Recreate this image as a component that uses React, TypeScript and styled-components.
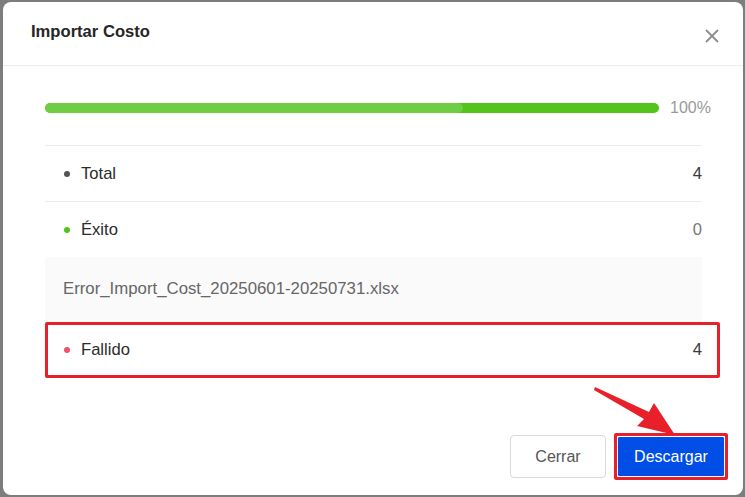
import styled, { createGlobalStyle } from "styled-components";

const GlobalStyle = createGlobalStyle`
    html, body {
        margin: 0;
        padding: 0;
        background: #7d7d7d;
        font-family: "Liberation Sans", Arial, sans-serif;
    }
`;

const Backdrop = styled.div`
    width: 745px;
    height: 497px;
    padding: 2px 2px 2px 3px;
    box-sizing: border-box;
    overflow: hidden;
`;

const Modal = styled.div`
    position: relative;
    width: 740px;
    height: 493px;
    background: #ffffff;
    border-radius: 8px;
    display: flex;
    flex-direction: column;
`;

const Header = styled.div`
    display: flex;
    align-items: center;
    justify-content: space-between;
    height: 64px;
    padding: 0 23px 0 28px;
    border-bottom: 1px solid #ededed;
    box-sizing: border-box;
`;

const Title = styled.div`
    font-size: 16.6px;
    font-weight: 700;
    color: #262626;
    margin-top: -3px;
`;

const Close = styled.button`
    border: 0;
    background: none;
    padding: 0;
    width: 16px;
    height: 16px;
    display: flex;
    align-items: center;
    justify-content: center;
    margin-top: 5px;
`;

const Body = styled.div`
    padding: 37px 41px 0 42px;
    display: flex;
    flex-direction: column;
`;

const ProgressLine = styled.div`
    width: 666px;
    display: flex;
    align-items: center;
    gap: 11px;
    height: 10px;
    margin-bottom: 32px;
`;

const Track = styled.div`
    flex: 1;
    height: 10px;
    border-radius: 5px;
    background: #52c41a;
    overflow: hidden;
    display: flex;
`;

const Shine = styled.div`
    height: 100%;
    background: #6fcd43;
    border-radius: 5px;
`;

const Percent = styled.span`
    font-size: 16px;
    color: #999999;
    width: 41px;
`;

const List = styled.div`
    width: 657px;
    display: flex;
    flex-direction: column;
`;

const Row = styled.div<{ $line?: boolean }>`
    height: 56px;
    display: flex;
    align-items: center;
    justify-content: space-between;
    padding-left: 19px;
    border-top: ${(p) => (p.$line ? "1px solid #ececec" : "0")};
    box-sizing: border-box;
    font-size: 16.6px;
`;

const Label = styled.span`
    display: flex;
    align-items: center;
    gap: 11px;
    color: #2b2b2b;
`;

const Dot = styled.span<{ $color: string }>`
    width: 6px;
    height: 6px;
    border-radius: 50%;
    background: ${(p) => p.$color};
`;

const Value = styled.span<{ $muted?: boolean }>`
    color: ${(p) => (p.$muted ? "#777777" : "#3a3a3a")};
`;

const FileBox = styled.div`
    height: 65px;
    background: #fafafa;
    display: flex;
    align-items: center;
    padding: 0 0 2px 18px;
    box-sizing: border-box;
    font-size: 16.8px;
    color: #666666;
`;

const Marked = styled.div`
    position: relative;
`;

const MarkBox = styled.div`
    position: absolute;
    left: 0;
    top: 0;
    width: 675px;
    height: 56px;
    border: 3px solid #e8202a;
    border-radius: 2px;
    box-sizing: border-box;
    pointer-events: none;
`;

const Footer = styled.div`
    margin-top: auto;
    display: flex;
    justify-content: flex-end;
    align-items: center;
    gap: 8px;
    padding: 0 15px 15px 0;
`;

const Button = styled.button<{ $primary?: boolean }>`
    font-family: "Liberation Sans", Arial, sans-serif;
    font-size: 16px;
    width: ${(p) => (p.$primary ? "106px" : "96px")};
    height: ${(p) => (p.$primary ? "39px" : "43px")};
    padding: 0;
    border-radius: ${(p) => (p.$primary ? "1px" : "4px")};
    cursor: pointer;
    border: 1px solid ${(p) => (p.$primary ? "#004ee6" : "#d9d9d9")};
    background: ${(p) => (p.$primary ? "#004ee6" : "#ffffff")};
    color: ${(p) => (p.$primary ? "#ffffff" : "#555555")};
`;

const Highlight = styled.div`
    border: 3px solid #e8202a;
    border-radius: 2px;
    padding: 1px;
    display: flex;
`;

const Arrow = styled.svg`
    position: absolute;
    left: 577px;
    top: 378px;
    pointer-events: none;
`;

export default function App() {
    return (
        <>
            <GlobalStyle />
            <Backdrop>
                <Modal>
                    <Header>
                        <Title>Importar Costo</Title>
                        <Close aria-label="Cerrar">
                            <svg width="14" height="14" viewBox="0 0 14 14">
                                <path d="M1 1L13 13M13 1L1 13" stroke="#8c8c8c" strokeWidth="1.8" />
                            </svg>
                        </Close>
                    </Header>
                    <Body>
                        <ProgressLine>
                            <Track>
                                <Shine style={{ width: "68%" }} />
                            </Track>
                            <Percent>100%</Percent>
                        </ProgressLine>
                        <List>
                            <Row $line>
                                <Label><Dot $color="#555555" />Total</Label>
                                <Value>4</Value>
                            </Row>
                            <Row $line>
                                <Label><Dot $color="#52c41a" />Éxito</Label>
                                <Value $muted>0</Value>
                            </Row>
                            <FileBox>Error_Import_Cost_20250601-20250731.xlsx</FileBox>
                            <Marked>
                                <Row>
                                    <Label><Dot $color="#f0506e" />Fallido</Label>
                                    <Value>4</Value>
                                </Row>
                                <MarkBox />
                            </Marked>
                        </List>
                    </Body>
                    <Footer>
                        <Button>Cerrar</Button>
                        <Highlight>
                            <Button $primary>Descargar</Button>
                        </Highlight>
                    </Footer>
                    <Arrow width="110" height="60" viewBox="0 0 110 60">
                        <polygon
                            points="15,7 69,32 74,23 95,55 57,46 64,39 14,10"
                            fill="#e8202a"
                        />
                    </Arrow>
                </Modal>
            </Backdrop>
        </>
    );
}
